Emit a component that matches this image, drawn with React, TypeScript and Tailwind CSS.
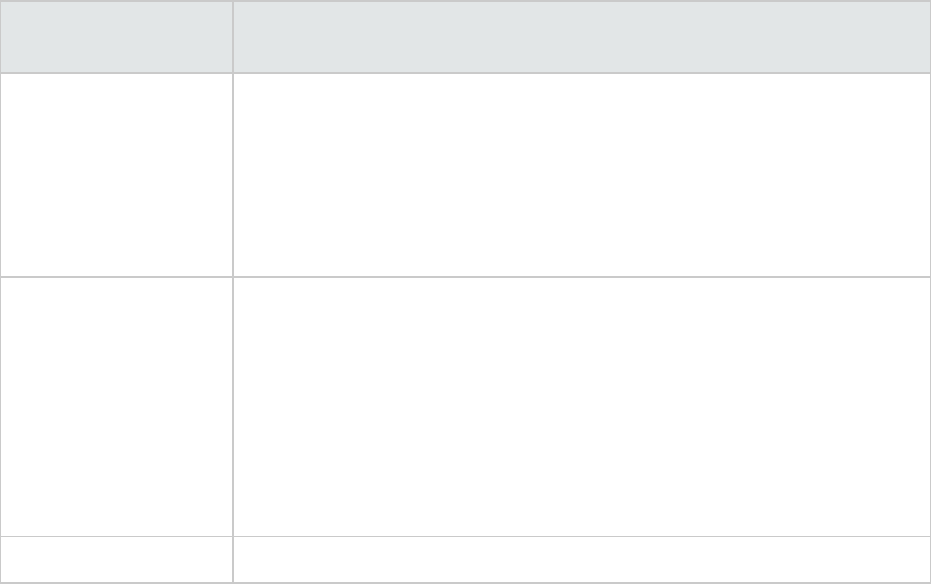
export default function App() {
  const row = "flex border-[#cacaca]";
  const c1 = "w-[233px] border-r-2 border-[#cacaca]";
  return (
    <div className="w-[931px] h-[584px] bg-white flex flex-col border-t-2 border-b-2 border-x border-[#cacaca]" style={{ fontFamily: "'Liberation Sans', sans-serif" }}>
      <div className={`${row} h-[72px] bg-[#e2e6e7] border-b-2`}>
        <div className={c1}></div>
        <div className="flex-1"></div>
      </div>
      <div className={`${row} h-[204px] border-b-2`}>
        <div className={c1}></div>
        <div className="flex-1"></div>
      </div>
      <div className={`${row} h-[259px] border-b`}>
        <div className={c1}></div>
        <div className="flex-1"></div>
      </div>
      <div className={`${row} flex-1`}>
        <div className={c1}></div>
        <div className="flex-1"></div>
      </div>
    </div>
  );
}
